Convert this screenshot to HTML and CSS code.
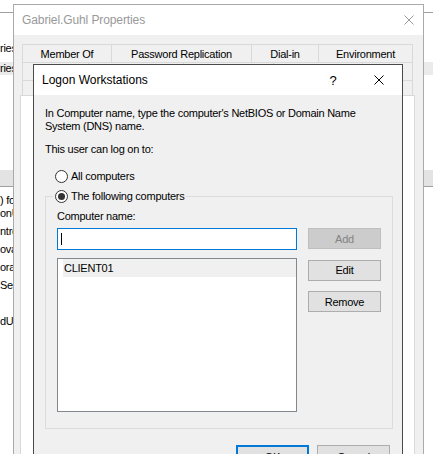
FILE: index.html
```html
<!DOCTYPE html>
<html>
<head>
<meta charset="utf-8">
<link rel="stylesheet" href="styles.css">
</head>
<body>
<div class="bgwin">
  <div class="bg-toolbar"></div>
  <div class="bg-row bg-row-a">ries</div>
  <div class="bg-row bg-row-b">ries</div>
  <div class="bg-header"></div>
  <div class="bg-desc">) for<br>onU</div>
  <div class="bg-list">
    <div class="bg-item">ntrol</div>
    <div class="bg-item">ova</div>
    <div class="bg-item">ora</div>
    <div class="bg-item">Sen</div>
    <div class="bg-item"></div>
    <div class="bg-item">dUs</div>
  </div>
</div>

<div class="win props">
  <div class="props-title">
    <span>Gabriel.Guhl Properties</span>
    <svg class="x-icon" width="10" height="10" viewBox="0 0 10 10"><path d="M0.5 0.5L9.5 9.5M9.5 0.5L0.5 9.5" stroke="#9a9a9a" stroke-width="1" fill="none"/></svg>
  </div>
  <div class="tabrow tabrow-1">
    <div class="tab t-member">Member Of</div>
    <div class="tab t-pass">Password Replication</div>
    <div class="tab t-dial">Dial-in</div>
    <div class="tab t-env">Environment</div>
  </div>
  <div class="tabrow tabrow-2">
    <div class="tab t2a"></div>
    <div class="tab t2b"></div>
    <div class="tab t2c"></div>
    <div class="tab t2d"></div>
    <div class="tab t2e"></div>
  </div>
  <div class="tabrow tabrow-3">
    <div class="tab t3a"></div>
  </div>
  <div class="panel"></div>
</div>

<div class="win dialog">
  <div class="dlg-title">
    <span class="dlg-caption">Logon Workstations</span>
    <span class="cap-btn help">?</span>
    <span class="cap-btn close"><svg width="10" height="10" viewBox="0 0 10 10"><path d="M0.5 0.5L9.5 9.5M9.5 0.5L0.5 9.5" stroke="#000" stroke-width="1" fill="none"/></svg></span>
  </div>
  <div class="dlg-body">
    <p class="intro">In Computer name, type the computer's NetBIOS or Domain Name<br>System (DNS) name.</p>
    <p class="can-log">This user can log on to:</p>
    <div class="radio-row first"><span class="radio"></span><span>All computers</span></div>
    <fieldset class="group">
      <legend class="legend"><span class="radio on"></span><span>The following computers</span></legend>
      <div class="fields">
        <div class="left-col">
          <div class="field-label">Computer name:</div>
          <div class="textbox"><span class="caret"></span></div>
          <div class="listbox">
            <div class="list-item">CLIENT01</div>
          </div>
        </div>
        <div class="right-col">
          <div class="btn disabled">Add</div>
          <div class="btn">Edit</div>
          <div class="btn">Remove</div>
        </div>
      </div>
    </fieldset>
    <div class="dlg-actions">
      <div class="btn big default">OK</div>
      <div class="btn big">Cancel</div>
    </div>
  </div>
</div>
</body>
</html>
```

FILE: styles.css
```css
* { box-sizing: border-box; }
html, body { margin: 0; padding: 0; }
body {
  width: 433px;
  height: 454px;
  overflow: hidden;
  position: relative;
  background: #ffffff;
  font-family: "Liberation Sans", Arial, sans-serif;
  font-size: 11px;
  letter-spacing: -0.25px;
  color: #000;
}

/* background window (desktop layer) */
.bgwin {
  position: absolute;
  left: 0; top: 0; right: 0; bottom: 0;
}
.bg-toolbar { height: 13px; border-bottom: 1px solid #a0a0a0; }
.bg-row { line-height: 13px; white-space: nowrap; }
.bg-row-a { margin-top: 29px; }
.bg-row-b { margin-top: 7px; background: #ebebeb; }
.bg-header {
  margin-top: 95px;
  height: 17px;
  background: #e3e3e3;
  border-bottom: 1px solid #a0a0a0;
}
.bg-desc { margin-top: 7px; line-height: 13px; white-space: nowrap; }
.bg-list { margin-top: 2px; }
.bg-item { height: 18px; line-height: 18px; white-space: nowrap; }

/* windows */
.win { position: absolute; display: flex; flex-direction: column; }

.props {
  left: 13px; top: 4px;
  width: 411px; height: 470px;
  border: 1px solid #aaaaaa;
  background: #f0f0f0;
}
.props-title {
  height: 30px;
  flex: none;
  background: #fff;
  display: flex;
  align-items: center;
  justify-content: space-between;
  padding: 0 9px 0 8px;
  color: #999999;
  font-size: 12px;
  letter-spacing: -0.1px;
}
.tabrow {
  display: flex;
  margin: 0 10px 0 8px;
  flex: none;
}
.tabrow-1 { margin-top: 9px; height: 18px; }
.tabrow-2 { height: 18px; }
.tabrow-3 { height: 15px; }
.tab {
  border-left: 1px solid #d9d9d9;
  border-top: 1px solid #d9d9d9;
  display: flex;
  align-items: center;
  justify-content: center;
  white-space: nowrap;
}
.tab:last-child { border-right: 1px solid #d9d9d9; }
.t-member { width: 89px; }
.t-pass { width: 140px; }
.t-dial { width: 67px; }
.t-env { flex: 1; }
.t2a { width: 66px; }
.t2b { width: 95px; }
.t2c { width: 90px; }
.t2d { width: 89px; }
.t2e { flex: 1; }
.t3a { flex: 1; }
.panel {
  flex: 1;
  margin: 0 8px 0 6px;
  border: 1px solid #d9d9d9;
  background: #ffffff;
}

.dialog {
  left: 33px; top: 64px;
  width: 370px; height: 400px;
  border: 1px solid #4a4a4a;
  background: #f0f0f0;
}
.dlg-title {
  height: 30px;
  flex: none;
  background: #fff;
  display: flex;
  align-items: center;
  padding-left: 8px;
  font-size: 12px;
  letter-spacing: 0;
}
.dlg-caption { flex: 1; }
.cap-btn {
  width: 46px;
  height: 30px;
  display: flex;
  align-items: center;
  justify-content: center;
}
.help { font-size: 13px; }

.dlg-body { padding: 12px 9px 0 11px; }
.intro, .can-log { margin: 0; line-height: 13px; }
.can-log { margin-top: 10px; }

.radio-row, .legend {
  height: 20px;
  display: flex;
  align-items: center;
  gap: 3px;
  white-space: nowrap;
}
.radio-row.first { margin-top: 10px; padding-left: 10px; }
.radio {
  width: 13px; height: 13px;
  border-radius: 50%;
  border: 1px solid #333333;
  background: #fff;
  display: flex;
  align-items: center;
  justify-content: center;
  flex: none;
}
.radio.on::after {
  content: "";
  width: 7px; height: 7px;
  border-radius: 50%;
  background: #333333;
}

.group {
  margin: 0;
  border: 1px solid #dcdcdc;
  padding: 4px 11px 16px 11px;
  min-width: 0;
}
.legend { padding: 0 2px; margin-left: -4px; }

.fields { display: flex; gap: 11px; }
.left-col { width: 240px; }
.field-label { line-height: 13px; }
.textbox {
  margin-top: 5px;
  height: 22px;
  border: 1px solid #0078d7;
  background: #fff;
  padding: 4px 3px;
  display: flex;
}
.caret { width: 1px; height: 12px; background: #000; }
.listbox {
  margin-top: 8px;
  height: 154px;
  border: 1px solid #828790;
  background: #fff;
  padding-left: 5px;
}
.list-item {
  height: 18px;
  line-height: 18px;
  background: #f0f0f0;
  padding-left: 1px;
}
.right-col {
  padding-top: 18px;
  display: flex;
  flex-direction: column;
  gap: 10.5px;
}
.btn {
  width: 73px;
  height: 21px;
  background: #e1e1e1;
  border: 1px solid #adadad;
  display: flex;
  align-items: center;
  justify-content: center;
}
.btn.disabled {
  background: #cccccc;
  border-color: #bfbfbf;
  color: #838383;
}
.dlg-actions {
  display: flex;
  justify-content: flex-end;
  gap: 8px;
  margin-top: 16px;
  margin-right: 3px;
}
.btn.big { height: 23px; }
.btn.default { border: 2px solid #0078d7; }
```
